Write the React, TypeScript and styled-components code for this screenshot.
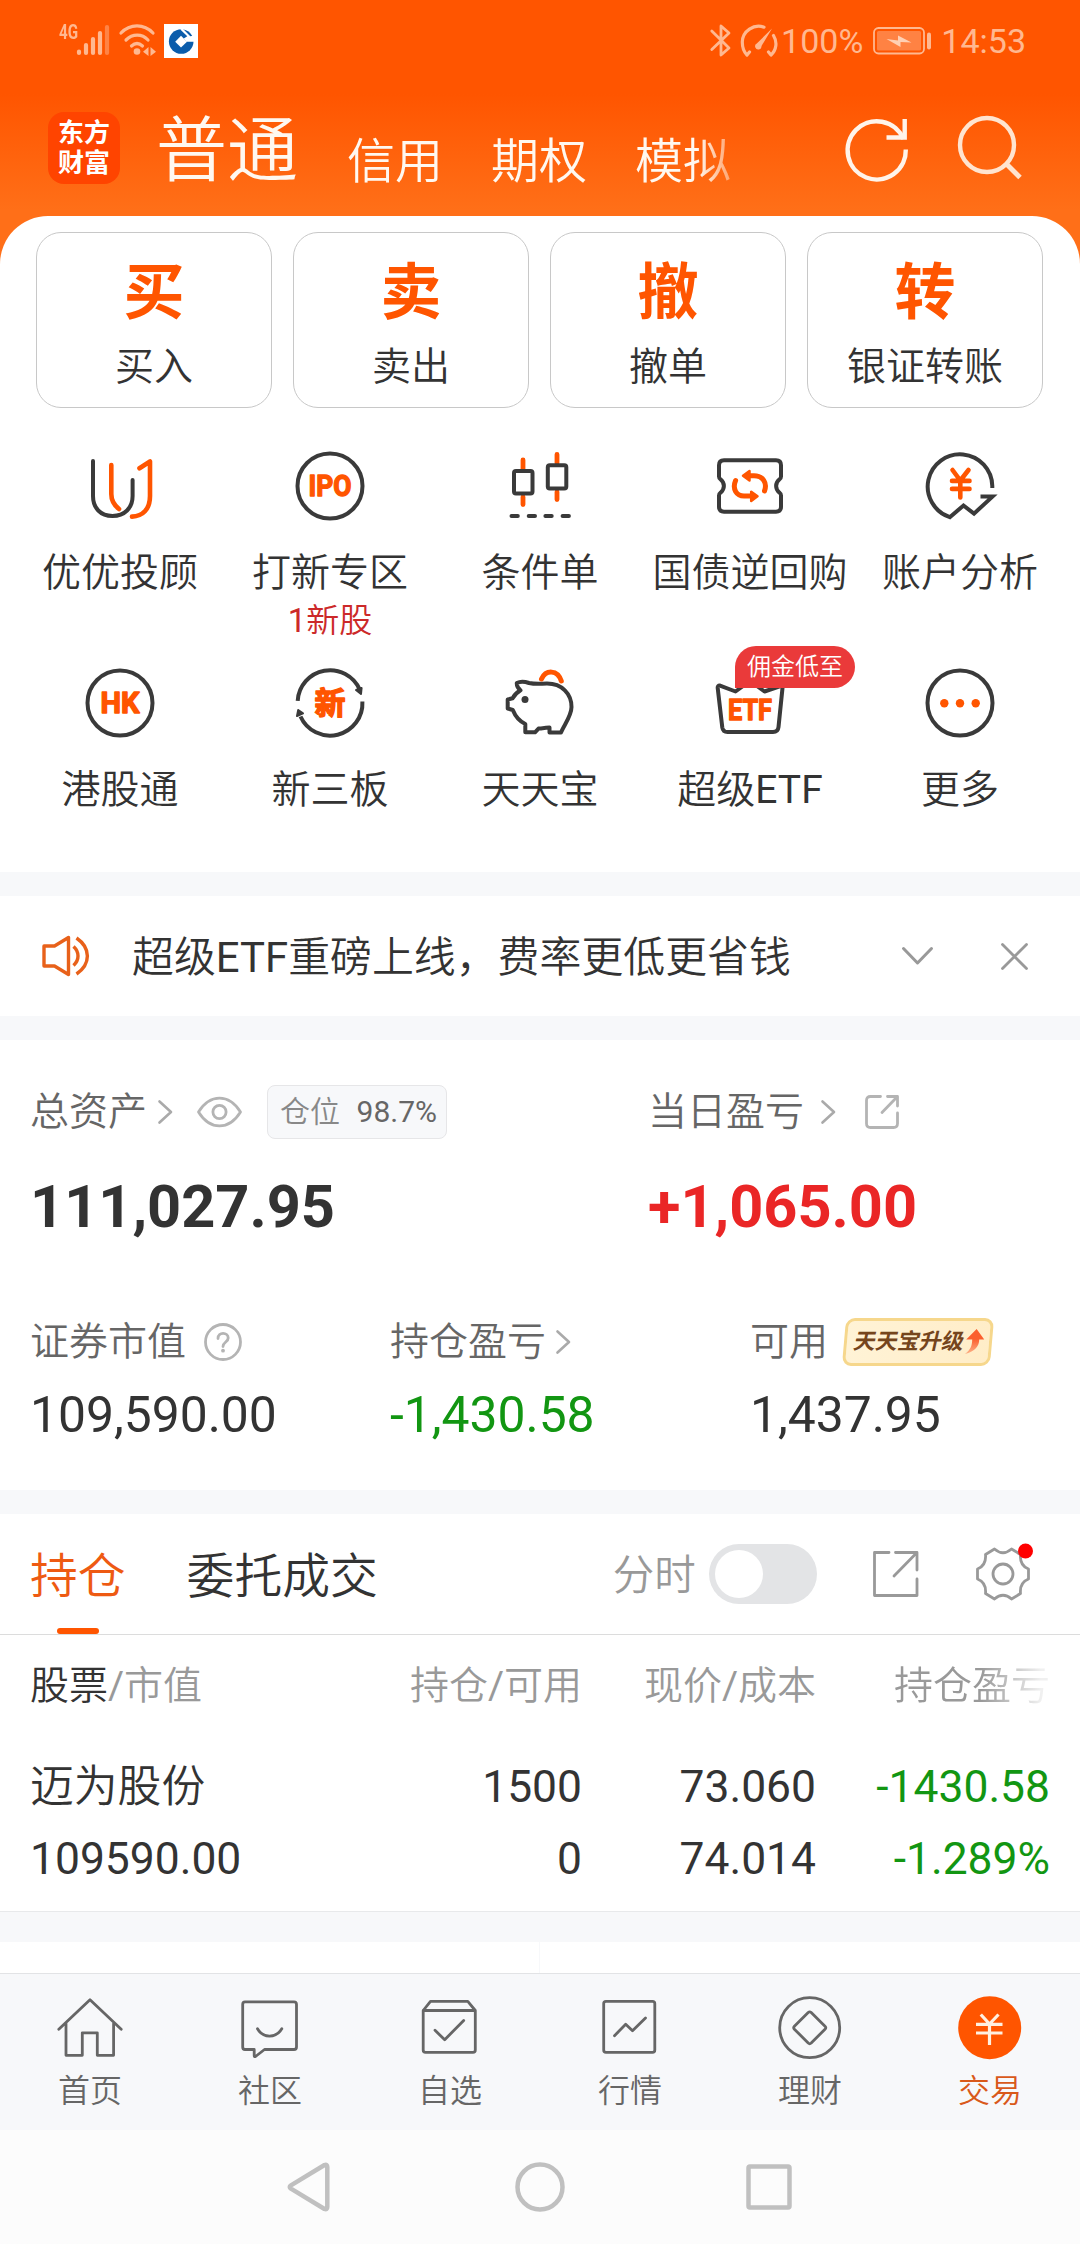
import React from "react";
import styled, { createGlobalStyle } from "styled-components";

const ORANGE = "#ff5500";
const INK = "#333333";
const HEAVY_FONT = 'Roboto, "Noto Sans CJK SC", sans-serif';

const GlobalStyle = createGlobalStyle`
  * { box-sizing: border-box; }
  html, body { margin: 0; padding: 0; }
  body {
    width: 1080px;
    height: 2244px;
    overflow: hidden;
    font-family: Roboto, "Noto Sans CJK SC DemiLight", "Noto Sans CJK SC", sans-serif;
    font-weight: 400;
    color: ${INK};
  }
  svg { display: block; overflow: visible; flex: none; }
`;

const Screen = styled.div`
  display: flex;
  flex-direction: column;
  width: 1080px;
  height: 2244px;
  overflow: hidden;
  background: linear-gradient(#ff5500 0, #ff5500 94px, #ff6f18 210px);
`;

/* ---------- status bar ---------- */

const StatusBar = styled.div`
  display: flex;
  justify-content: space-between;
  align-items: flex-start;
  height: 82px;
  padding: 24px 54px 0 59px;
  color: #ffb890;
`;

const StatusGroup = styled.div`
  display: flex;
  align-items: flex-start;
`;

const StatusText = styled.span<{ $gap: number }>`
  margin-left: ${(p) => p.$gap}px;
  font-size: 34px;
  line-height: 34px;
  white-space: nowrap;
`;

const NetType = styled.span`
  display: inline-block;
  width: 17px;
  font-size: 20px;
  line-height: 16px;
  font-weight: 700;
  transform: scaleX(0.76);
  transform-origin: left center;
`;

const BankIcon = styled.div`
  display: flex;
  width: 34px;
  height: 34px;
  margin-left: 8px;
  background: #fff;
`;

/* ---------- header ---------- */

const Header = styled.header`
  display: flex;
  align-items: flex-start;
  height: 134px;
  padding: 30px 0 0 48px;
  color: #fff8f0;
`;

const Logo = styled.div`
  display: flex;
  flex-direction: column;
  align-items: center;
  justify-content: center;
  width: 72px;
  height: 72px;
  border-radius: 16px;
  background: #ff4400;
  color: #fff;
  font-family: ${HEAVY_FONT};
  font-size: 26px;
  line-height: 30px;
  font-weight: 700;
`;

const MainTab = styled.span`
  margin-left: 36px;
  padding-top: 2px;
  font-size: 71px;
  line-height: 74px;
`;

const SideTabs = styled.div`
  display: flex;
  gap: 48px;
  width: 400px;
  margin-left: 49px;
  padding-top: 25px;
  font-size: 48px;
  line-height: 50px;
  white-space: nowrap;
  mask-image: linear-gradient(90deg, #000 0, #000 350px, rgba(0, 0, 0, 0.4) 385px);
`;

const HeaderActions = styled.div`
  display: flex;
  gap: 51px;
  margin-left: 99px;
  padding-top: 3px;
`;

/* ---------- trade panel ---------- */

const TradePanel = styled.section`
  height: 656px;
  padding: 16px 0 0;
  border-radius: 48px 48px 0 0;
  background: #fff;
`;

const CardRow = styled.div`
  display: grid;
  grid-template-columns: repeat(4, 236px);
  gap: 21px;
  padding: 0 36px;
`;

const Card = styled.div`
  display: flex;
  flex-direction: column;
  align-items: center;
  height: 176px;
  padding-top: 25px;
  border: 1px solid #c8c8c8;
  border-radius: 25px;
`;

const CardGlyph = styled.span`
  font-family: ${HEAVY_FONT};
  font-size: 61px;
  line-height: 70px;
  font-weight: 700;
  color: ${ORANGE};
`;

const CardLabel = styled.span`
  margin-top: 17px;
  font-size: 39px;
  line-height: 44px;
`;

const Shortcuts = styled.div`
  display: grid;
  grid-template-columns: repeat(5, 210px);
  grid-auto-rows: 217px;
  padding: 42px 15px 0;
`;

const Shortcut = styled.div`
  display: flex;
  flex-direction: column;
  align-items: center;
`;

const IconBox = styled.div`
  position: relative;
  width: 72px;
  height: 72px;
`;

const ShortcutLabel = styled.span`
  margin-top: 28px;
  font-size: 39px;
  line-height: 46px;
  white-space: nowrap;
`;

const ShortcutNote = styled.span`
  margin-top: 6px;
  font-size: 33px;
  line-height: 38px;
  color: #cc2929;
`;

const Promo = styled.span`
  position: absolute;
  left: 21px;
  top: -21px;
  width: 120px;
  height: 42px;
  border-radius: 21px 21px 21px 0;
  background: #ea3a3a;
  color: #fff;
  font-size: 24px;
  line-height: 43px;
  text-align: center;
  white-space: nowrap;
`;

const Gap = styled.div<{ $h: number }>`
  flex: none;
  height: ${(p) => p.$h}px;
  background: #f7f8fa;
`;

/* ---------- notice ---------- */

const Notice = styled.section`
  display: flex;
  align-items: center;
  height: 120px;
  padding-left: 42px;
  background: #fff;
`;

const NoticeText = styled.span`
  width: 770px;
  margin-left: 42px;
  padding-top: 4px;
  font-size: 41.9px;
  line-height: 48px;
  white-space: nowrap;
`;

const CloseSlot = styled.div`
  margin-left: 68px;
`;

/* ---------- assets ---------- */

const Assets = styled.section`
  height: 450px;
  padding: 45px 0 0 30px;
  background: #fff;
`;

const Summary = styled.div`
  display: grid;
  grid-template-columns: 618px 1fr;
`;

const Details = styled.div`
  display: grid;
  grid-template-columns: 360px 360px 1fr;
  margin-top: 72px;
`;

const LabelRow = styled.div`
  display: flex;
  align-items: center;
  height: 54px;
  font-size: 39px;
  line-height: 50px;
  color: #666666;
  white-space: nowrap;
`;

const After = styled.div<{ $gap: number }>`
  margin-left: ${(p) => p.$gap}px;
`;

const PositionChip = styled.div`
  display: flex;
  align-items: center;
  justify-content: space-between;
  width: 180px;
  height: 54px;
  margin-left: 25px;
  padding: 0 9px 0 12px;
  border: 1px solid #e6e6e8;
  border-radius: 8px;
  background: #f7f8fa;
  font-size: 30px;
  color: #888888;
`;

const ChipValue = styled.span`
  color: #666666;
`;

const Total = styled.div<{ $color?: string }>`
  margin-top: 32px;
  font-size: 59.5px;
  line-height: 72px;
  font-weight: 700;
  color: ${(p) => p.$color ?? INK};
`;

const Amount = styled.div<{ $color?: string }>`
  margin-top: 16px;
  font-size: 49.8px;
  line-height: 60px;
  color: ${(p) => p.$color ?? INK};
`;

const UpgradeTag = styled.div`
  display: flex;
  align-items: center;
  width: 148px;
  height: 48px;
  margin-left: 16px;
  padding-left: 7px;
  border: 3px solid #f6d78c;
  border-radius: 9px;
  background: linear-gradient(90deg, #fff3d6, #ffedc8);
  transform: skewX(-5deg);
  font-family: ${HEAVY_FONT};
  font-size: 22px;
  line-height: 30px;
  font-weight: 700;
  color: #75451c;
`;

const TagText = styled.span`
  transform: skewX(-8deg);
`;

/* ---------- positions ---------- */

const Tabs = styled.section`
  display: flex;
  height: 121px;
  padding: 0 0 0 30px;
  border-bottom: 1px solid #dcdcdc;
  background: #fff;
`;

const Tab = styled.div<{ $active?: boolean; $gap?: number }>`
  display: flex;
  flex-direction: column;
  align-items: center;
  justify-content: flex-end;
  height: 120px;
  margin-left: ${(p) => p.$gap ?? 0}px;
  font-size: 47.8px;
  line-height: 56px;
  color: ${(p) => (p.$active ? "#ee5a12" : INK)};
`;

const TabMark = styled.div<{ $active?: boolean }>`
  width: 42px;
  height: 6px;
  margin-top: 23px;
  border-radius: 3px;
  background: ${(p) => (p.$active ? ORANGE : "transparent")};
`;

const TabTools = styled.div`
  display: flex;
  align-items: center;
  height: 120px;
  margin-left: 235px;
`;

const ToolLabel = styled.span`
  padding-top: 3px;
  font-size: 41.5px;
  line-height: 48px;
  color: #999999;
`;

const Switch = styled.div`
  width: 108px;
  height: 60px;
  margin-left: 13px;
  padding: 6px;
  border-radius: 30px;
  background: #e3e4e6;
`;

const Knob = styled.div`
  width: 48px;
  height: 48px;
  border-radius: 50%;
  background: #fff;
`;

const Table = styled.section`
  height: 277px;
  padding: 26px 30px 0 30px;
  border-bottom: 1px solid #e8e9eb;
  background: #fff;
`;

const TableRow = styled.div<{ $head?: boolean }>`
  display: grid;
  grid-template-columns: 318px 234px 234px 234px;
  margin-bottom: ${(p) => (p.$head ? 40 : 0)}px;
  font-size: ${(p) => (p.$head ? 39 : 44.4)}px;
  line-height: ${(p) => (p.$head ? 50 : 72)}px;
  color: ${(p) => (p.$head ? "#999999" : INK)};
  white-space: nowrap;
`;

const Cell = styled.span<{ $left?: boolean; $green?: boolean; $fade?: boolean; $name?: boolean }>`
  text-align: ${(p) => (p.$left ? "left" : "right")};
  ${(p) => p.$green && "color: #129612;"}
  ${(p) => p.$name && "font-size: 43.8px;"}
  ${(p) => p.$fade && "mask-image: linear-gradient(90deg, #000 0, #000 165px, rgba(0,0,0,0.15) 225px);"}
`;

const Strong = styled.span`
  color: ${INK};
`;

const NextPanel = styled.div`
  display: grid;
  grid-template-columns: 539px 540px;
  gap: 1px;
  flex: none;
  height: 31px;
  background: #f7f8fa;
`;

const NextCell = styled.div`
  background: #fff;
`;

/* ---------- bottom ---------- */

const BottomBar = styled.nav`
  display: grid;
  grid-template-columns: repeat(6, 180px);
  height: 157px;
  border-top: 1px solid #e2e3e5;
  background: #f7f8fa;
`;

const BottomItem = styled.div<{ $active?: boolean }>`
  display: flex;
  flex-direction: column;
  align-items: center;
  padding-top: 22px;
  font-size: 32px;
  line-height: 38px;
  color: ${(p) => (p.$active ? "#d9591a" : "#666666")};
`;

const BottomLabel = styled.span`
  margin-top: 12px;
`;

const SystemNav = styled.div`
  display: flex;
  align-items: center;
  height: 114px;
  padding-left: 287px;
  background: #fcfcfc;
`;

/* ---------- icons ---------- */

const line = { fill: "none", strokeLinecap: "round", strokeLinejoin: "round" } as const;

const ICON_INK = "#3a3a3a";

const Glyph72 = ({ children }: { children: React.ReactNode }) => (
  <svg width="72" height="72" viewBox="0 0 72 72" {...line} stroke={ICON_INK} strokeWidth={4}>
    {children}
  </svg>
);

const IconWord = ({ text, y, width, size }: { text: string; y: number; width: number; size: number }) => (
  <text
    x="36"
    y={y}
    textAnchor="middle"
    textLength={width}
    lengthAdjust="spacingAndGlyphs"
    fontFamily={HEAVY_FONT}
    fontWeight="700"
    fontSize={size}
    fill={ORANGE}
    stroke={ORANGE}
    strokeWidth="1.4"
  >
    {text}
  </text>
);

const AdvisorIcon = () => (
  <Glyph72>
    <path d="M9 11V46C9 58 16.500 66 28.500 66S48.600 58 48.600 46V30" />
    <path stroke={ORANGE} strokeWidth="4.600" d="M27.300 15V44C27.300 51 30 55 35 59M55.500 18.300L66 11.500V46C66 59 59 66.300 48 66.600" />
  </Glyph72>
);
const IpoIcon = () => (
  <Glyph72>
    <circle cx="36" cy="36" r="32.500" />
    <IconWord text="IPO" y={46.4} width={43} size={30} />
  </Glyph72>
);
const CandleIcon = () => (
  <Glyph72>
    <path stroke={ORANGE} strokeWidth="4.800" d="M19 10V19M19 47V54.500M53 4.500V13M53 42V49.500" />
    <rect x="10" y="21" width="18.500" height="22.500" rx="2" />
    <rect x="43.800" y="15.300" width="18.500" height="23.200" rx="2" />
    <path d="M7.500 66H13.800M24.700 66H31M41.400 66H47.700M58.600 66H64.900" />
  </Glyph72>
);
const BondIcon = () => (
  <Glyph72>
    <path d="M10 10.300H62Q67 10.300 67 15.300V26.500Q67 28.300 65.500 29.300C61 33 61 39 65.500 42.700Q67 43.700 67 45.500V56.700Q67 61.700 62 61.700H10Q5 61.700 5 56.700V45.500Q5 43.700 6.500 42.700C11 39 11 33 6.500 29.300Q5 28.300 5 26.500V15.300Q5 10.300 10 10.300Z" />
    <g stroke={ORANGE} strokeWidth="5">
      <path d="M35 25.800H40C49 25.800 53.500 33 50.500 41M21.600 30.500C18 39 22.500 46 30 46H37" />
      <path d="M29 25.700L35.500 21V30.500ZM43.500 46.200L37.200 41.700V51Z" fill={ORANGE} strokeWidth="2.500" />
    </g>
  </Glyph72>
);
const AnalysisIcon = () => (
  <Glyph72>
    <path strokeLinejoin="miter" strokeLinecap="butt" d="M68.300 38V36A32.300 32.300 0 1 0 25.800 67.200L39.500 55.500L50 63.600L68.500 46.600H56.500" />
    <path stroke={ORANGE} strokeWidth="4.600" d="M28.500 20L36.300 30.500L44.500 20M36.300 31V47.500M28 30.900H45.500M28 38.900H45.500" />
  </Glyph72>
);
const HkIcon = () => (
  <Glyph72>
    <circle cx="36" cy="36" r="32.500" />
    <IconWord text="HK" y={46.4} width={39} size={30} />
  </Glyph72>
);
const NewBoardIcon = () => (
  <Glyph72>
    <path strokeLinecap="butt" d="M3.700 33.800A32.400 32.400 0 0 1 65.700 22.500M68.400 34.500A32.400 32.400 0 0 1 6.500 49.500" />
    <path d="M62 23L67.600 21L67 27ZM4.200 43L9 46.400L3 49Z" fill={ICON_INK} strokeWidth="2" />
    <IconWord text="新" y={47} width={31} size={31} />
  </Glyph72>
);
const PiggyIcon = () => (
  <Glyph72>
    <path d="M12.800 16C17 13.800 21 14.600 25 16C32 17.500 37 16.600 43 16.600C58 16.600 67.500 27 67.500 40C67.500 49 60 58 57 65.500H45.500V60.600C42 61 38 61.300 34.500 61.600L31 65.300H21.300V57C15 54 11 48.500 8.800 43L3.700 41.500V32.500L8.600 31.300C10.500 27.500 13 25.500 16.500 23.300C13.500 21 12.600 19 12.800 16Z" />
    <circle cx="21" cy="32.600" r="3.500" fill={ICON_INK} stroke="none" />
    <path stroke={ORANGE} strokeWidth="5" d="M37.500 12C42 2.500 53.500 2.500 57.300 14" />
  </Glyph72>
);
const EtfIcon = () => (
  <Glyph72>
    <path d="M6 18.600L21.500 24.500L36 14L50.500 24.500L66.500 19Q68.800 18.800 68.500 21L64.500 60Q64 65 59 65H13.500Q9 65 8.300 60.500L3.700 21Q3.500 18.300 6 18.600Z" />
    <IconWord text="ETF" y={53.2} width={44} size={30} />
  </Glyph72>
);
const MoreIcon = () => (
  <Glyph72>
    <circle cx="36" cy="36" r="32.500" />
    <g fill={ORANGE} stroke="none">
      <circle cx="20.300" cy="36.300" r="4.200" />
      <circle cx="36" cy="36.300" r="4.200" />
      <circle cx="51.700" cy="36.300" r="4.200" />
    </g>
  </Glyph72>
);

const Chevron = () => (
  <svg width="15" height="24" viewBox="0 0 15 24" {...line} stroke="#aaaaaa" strokeWidth="2.600">
    <path d="M1.500 1.500L13 12L1.500 22.500" />
  </svg>
);

const Glyph64 = ({ children }: { children: React.ReactNode }) => (
  <svg width="64" height="64" viewBox="0 0 64 64" {...line} stroke="#666666" strokeWidth={2.800}>
    {children}
  </svg>
);

/* ---------- data ---------- */

const cards = [
  { glyph: "买", label: "买入" },
  { glyph: "卖", label: "卖出" },
  { glyph: "撤", label: "撤单" },
  { glyph: "转", label: "银证转账" },
];

const shortcuts: { label: string; icon: React.ReactNode; note?: string; promo?: string }[] = [
  { label: "优优投顾", icon: <AdvisorIcon /> },
  { label: "打新专区", icon: <IpoIcon />, note: "1新股" },
  { label: "条件单", icon: <CandleIcon /> },
  { label: "国债逆回购", icon: <BondIcon /> },
  { label: "账户分析", icon: <AnalysisIcon /> },
  { label: "港股通", icon: <HkIcon /> },
  { label: "新三板", icon: <NewBoardIcon /> },
  { label: "天天宝", icon: <PiggyIcon /> },
  { label: "超级ETF", icon: <EtfIcon />, promo: "佣金低至" },
  { label: "更多", icon: <MoreIcon /> },
];

const bottomItems = [
  {
    label: "首页",
    icon: (
      <path d="M.8 33.300L32 3.800L63.200 33.300M8 27.500V59.300H24.300V36.800H39.300V59.300H55.600V27.500" />
    ),
  },
  {
    label: "社区",
    icon: (
      <path d="M7 5.900H56Q58.500 5.900 58.500 8.400V51Q58.500 53.500 56 53.500H26.500L17.500 60.500Q16.200 61.200 16.200 59.500V53.500H7Q4.700 53.500 4.700 51V8.400Q4.700 5.900 7 5.900ZM19.500 32.800C25 42.500 38 42.500 43.800 32.800" />
    ),
  },
  {
    label: "自选",
    icon: (
      <path d="M5.200 14.500L12.500 5.300H49.800L57.300 14.500V54Q57.300 56.400 55 56.400H7.500Q5.200 56.400 5.200 54ZM5.200 14.500H57.300M17 34.300L26.700 43.700L45.700 24.500" />
    ),
  },
  {
    label: "行情",
    icon: (
      <path d="M8 5.300H54.500Q56.800 5.300 56.800 7.600V54Q56.800 56.400 54.500 56.400H8Q5.700 56.400 5.700 54V7.600Q5.700 5.300 8 5.300ZM16.500 39.700L27.700 28.300L34.500 34.800L47.500 22" />
    ),
  },
  {
    label: "理财",
    icon: (
      <>
        <circle cx="31.700" cy="31.700" r="30" />
        <path d="M30.200 16.600Q31.700 15.200 33.200 16.600L47 30.200Q48.500 31.700 47 33.200L33.200 47Q31.700 48.400 30.200 47L16.400 33.200Q15 31.700 16.400 30.200Z" />
      </>
    ),
  },
  {
    label: "交易",
    active: true,
    icon: (
      <>
        <circle cx="31.700" cy="31.700" r="31.500" fill={ORANGE} stroke="none" />
        <path stroke="#fff0e0" strokeWidth="3.200" strokeLinecap="butt" d="M22.800 18.500L31.500 28L40.500 18.500M31.500 28V49M18 28.300H44.500M18 37H44.500" />
      </>
    ),
  },
];

export default function App() {
  return (
    <Screen>
      <GlobalStyle />
      <StatusBar>
        <StatusGroup>
          <NetType>4G</NetType>
          <svg width="34" height="32" viewBox="0 0 34 32" {...line} stroke="#ffb890" strokeWidth="4.200">
            <path d="M3 27.500V29M10 21V29M17 15V29M24 9V29" />
            <path d="M31 3V29" stroke="#ff8345" />
          </svg>
          <After $gap={8}>
            <svg width="38" height="32" viewBox="0 0 38 32" {...line} stroke="#ffb890" strokeWidth="3.200">
              <path d="M3 9C12-.5 26-.5 35 9M8 16C14.500 9.500 24 9.500 30 16M13.500 22C17 18.800 21 18.800 24.500 22" />
              <circle cx="19" cy="27.500" r="3.300" fill="#ffb890" stroke="none" />
              <path d="M30.500 23V32L25 27.800ZM32.500 23V32L38 27.800Z" fill="#ffb890" stroke="none" />
            </svg>
          </After>
          <BankIcon>
            <svg width="34" height="34" viewBox="0 0 34 34">
              <circle cx="17.200" cy="17.500" r="12.300" fill="#0a5cab" />
              <path fill="#fff" d="M17 11.800L23 17.700L17 23.500L11.200 17.700Z" />
              <path fill="#fff" d="M19.800 14.600L23.300 12.200L16.300 5.500L18.600 4.500L26.300 12.300L30.500 11.500V17.800H22.500Z" />
            </svg>
          </BankIcon>
        </StatusGroup>
        <StatusGroup>
          <svg width="21" height="33" viewBox="0 0 21 33" {...line} stroke="#ffb890" strokeWidth="2.800">
            <path d="M1.800 7L19 24L11 31V2L19 9L1.800 25.500" />
          </svg>
          <After $gap={9}>
            <svg width="38" height="33" viewBox="0 0 38 33" {...line} stroke="#ffb890" strokeWidth="3.200">
              <path d="M24 3.200C14-.5 2.500 7 2.300 18C2.300 23 4 28 7 31L9.500 28M33.500 11.500C37.500 18 36.500 26 31 31L28.500 28" />
              <path d="M32 4.500L21.500 22A3.200 3.200 0 1 1 16.800 19.500Z" fill="#ffb890" stroke="none" />
            </svg>
          </After>
          <StatusText $gap={3}>100%</StatusText>
          <After $gap={10}>
            <svg width="59" height="34" viewBox="0 -3 59 34" {...line} stroke="#ffb890" strokeWidth="1.800">
              <rect x="1" y="1" width="50" height="25.500" rx="4.500" />
              <rect x="4" y="4" width="44" height="19.500" rx="1.500" fill="#ff8243" stroke="none" />
              <path d="M13.500 12L25 13.500V8.500L38.500 15.500L27.500 15V20Z" fill="#ffd0b4" stroke="none" />
              <path d="M56 7.500V20.500" strokeWidth="4" />
            </svg>
          </After>
          <StatusText $gap={9}>14:53</StatusText>
        </StatusGroup>
      </StatusBar>

      <Header>
        <Logo>
          <span>东方</span>
          <span>财富</span>
        </Logo>
        <MainTab>普通</MainTab>
        <SideTabs>
          <span>信用</span>
          <span>期权</span>
          <span>模拟</span>
        </SideTabs>
        <HeaderActions>
          <svg width="62" height="66" viewBox="0 0 62 66" fill="none" stroke="#fff4ea" strokeWidth="4.400">
            <path d="M59.800 34.500A29.100 29.100 0 1 1 57.500 24" />
            <path d="M58.700 4V22.500H40.500" />
          </svg>
          <svg width="64" height="66" viewBox="0 0 64 66" fill="none" stroke="#ffe4d0" strokeWidth="4.400">
            <circle cx="28" cy="30" r="27" />
            <path d="M47.500 49L61 62.500" strokeWidth="5" />
          </svg>
        </HeaderActions>
      </Header>

      <TradePanel>
        <CardRow>
          {cards.map((c) => (
            <Card key={c.label}>
              <CardGlyph>{c.glyph}</CardGlyph>
              <CardLabel>{c.label}</CardLabel>
            </Card>
          ))}
        </CardRow>
        <Shortcuts>
          {shortcuts.map((s) => (
            <Shortcut key={s.label}>
              <IconBox>
                {s.icon}
                {s.promo && <Promo>{s.promo}</Promo>}
              </IconBox>
              <ShortcutLabel>{s.label}</ShortcutLabel>
              {s.note && <ShortcutNote>{s.note}</ShortcutNote>}
            </Shortcut>
          ))}
        </Shortcuts>
      </TradePanel>

      <Gap $h={24} />
      <Notice>
        <svg width="48" height="42" viewBox="0 0 48 42" {...line} strokeLinecap="butt" stroke="#e8611a" strokeWidth="3.400">
          <path d="M2 11H12.500L26.500 2.500V39.500L12.500 31H2ZM31.500 11.500C37.500 17 37.500 25 31.500 30.500M34.500 3C49 13 49 29 34.500 39" />
        </svg>
        <NoticeText>超级ETF重磅上线，费率更低更省钱</NoticeText>
        <svg width="31" height="18" viewBox="0 0 31 18" {...line} stroke="#999999" strokeWidth="3">
          <path d="M1.500 1.500L15.500 16L29.500 1.500" />
        </svg>
        <CloseSlot>
          <svg width="27" height="27" viewBox="0 0 27 27" {...line} stroke="#999999" strokeWidth="2.800">
            <path d="M1.500 1.500L25.500 25.500M25.500 1.500L1.500 25.500" />
          </svg>
        </CloseSlot>
      </Notice>
      <Gap $h={24} />

      <Assets>
        <Summary>
          <div>
            <LabelRow>
              总资产
              <After $gap={11}><Chevron /></After>
              <After $gap={24}>
                <svg width="45" height="30" viewBox="0 0 45 30" {...line} stroke="#b4b4b4" strokeWidth="2.800">
                  <path d="M1.500 15C13-3.500 32-3.500 43.500 15C32 33.500 13 33.500 1.500 15Z" />
                  <circle cx="22.500" cy="15" r="6.600" />
                </svg>
              </After>
              <PositionChip>
                <span>仓位</span>
                <ChipValue>98.7%</ChipValue>
              </PositionChip>
            </LabelRow>
            <Total>111,027.95</Total>
          </div>
          <div>
            <LabelRow>
              当日盈亏
              <After $gap={17}><Chevron /></After>
              <After $gap={29}>
                <svg width="34" height="34" viewBox="0 0 34 34" {...line} stroke="#b4b4b4" strokeWidth="2.800">
                  <path d="M15.500 1.500H5.500Q1.500 1.500 1.500 5.500V28.500Q1.500 32.500 5.500 32.500H28.500Q32.500 32.500 32.500 28.500V18M22.500 1.500H32.500V11M32 2L17 17.500" />
                </svg>
              </After>
            </LabelRow>
            <Total $color="#ea2626">+1,065.00</Total>
          </div>
        </Summary>
        <Details>
          <div>
            <LabelRow>
              证券市值
              <After $gap={18}>
                <svg width="38" height="38" viewBox="0 0 38 38" {...line} stroke="#b4b4b4" strokeWidth="2.800">
                  <circle cx="19" cy="19" r="17.500" />
                  <path d="M14 15.500C14 8.500 24.200 9 24.200 15C24.200 19 19 19 19 23.500" />
                  <circle cx="19" cy="27.700" r="1.900" fill="#b4b4b4" stroke="none" />
                </svg>
              </After>
            </LabelRow>
            <Amount>109,590.00</Amount>
          </div>
          <div>
            <LabelRow>
              持仓盈亏
              <After $gap={10}><Chevron /></After>
            </LabelRow>
            <Amount $color="#129612">-1,430.58</Amount>
          </div>
          <div>
            <LabelRow>
              可用
              <UpgradeTag>
                <TagText>天天宝升级</TagText>
                <svg width="20" height="26" viewBox="0 0 20 26">
                  <defs>
                    <linearGradient id="rise" x1="0" y1="0" x2="0" y2="1">
                      <stop offset="0.400" stopColor="#fb5f2e" />
                      <stop offset="1" stopColor="#fdb48a" />
                    </linearGradient>
                  </defs>
                  <path fill="url(#rise)" d="M11.500 0L20 10.500H15C15.500 17 12 22.500 2 25C7 21 8.500 17 8 10.500H2Z" />
                </svg>
              </UpgradeTag>
            </LabelRow>
            <Amount>1,437.95</Amount>
          </div>
        </Details>
      </Assets>
      <Gap $h={24} />

      <Tabs>
        <Tab $active>
          持仓
          <TabMark $active />
        </Tab>
        <Tab $gap={61}>
          委托成交
          <TabMark />
        </Tab>
        <TabTools>
          <ToolLabel>分时</ToolLabel>
          <Switch>
            <Knob />
          </Switch>
          <After $gap={56}>
            <svg width="46" height="46" viewBox="0 0 46 46" {...line} stroke="#999999" strokeWidth="2.800">
              <path d="M16 1.500H1.500V44.500H44V28M22.500 1.500H44V19M43.500 2L21 25" />
            </svg>
          </After>
          <After $gap={56}>
            <svg width="56" height="54" viewBox="0 0 56 54" {...line} stroke="#999999" strokeWidth="2.800">
              <path d="M19.500 2Q28 9.500 36.500 2L45.500 7.500Q44.500 18.500 53.500 22V32Q44.500 35.500 45.500 46.500L36.500 52Q28 44.500 19.500 52L10.500 46.500Q11.500 35.500 2.500 32V22Q11.500 18.500 10.500 7.500Z" />
              <circle cx="28" cy="27" r="10" />
              <circle cx="50.500" cy="4" r="7.500" fill="#ff0000" stroke="none" />
            </svg>
          </After>
        </TabTools>
      </Tabs>

      <Table>
        <TableRow $head>
          <Cell $left>
            <Strong>股票</Strong>/市值
          </Cell>
          <Cell>持仓/可用</Cell>
          <Cell>现价/成本</Cell>
          <Cell $fade>持仓盈亏</Cell>
        </TableRow>
        <TableRow>
          <Cell $left $name>迈为股份</Cell>
          <Cell>1500</Cell>
          <Cell>73.060</Cell>
          <Cell $green>-1430.58</Cell>
        </TableRow>
        <TableRow>
          <Cell $left>109590.00</Cell>
          <Cell>0</Cell>
          <Cell>74.014</Cell>
          <Cell $green>-1.289%</Cell>
        </TableRow>
      </Table>
      <Gap $h={30} />
      <NextPanel>
        <NextCell />
        <NextCell />
      </NextPanel>

      <BottomBar>
        {bottomItems.map((b) => (
          <BottomItem key={b.label} $active={b.active}>
            <Glyph64>{b.icon}</Glyph64>
            <BottomLabel>{b.label}</BottomLabel>
          </BottomItem>
        ))}
      </BottomBar>
      <SystemNav>
        <svg width="43" height="50" viewBox="0 0 43 50" {...line} stroke="#c0c0c0" strokeWidth="4.500">
          <path d="M3.500 23.600Q2 25 3.500 26.400L37.500 47Q40.300 48 40.300 45V5Q40.300 2 37.500 3Z" />
        </svg>
        <After $gap={185}>
          <svg width="50" height="50" viewBox="0 0 50 50" {...line} stroke="#c0c0c0" strokeWidth="4.500">
            <circle cx="25" cy="25" r="22.500" />
          </svg>
        </After>
        <After $gap={181}>
          <svg width="46" height="46" viewBox="0 0 46 46" {...line} stroke="#c0c0c0" strokeWidth="4.500">
            <rect x="2.500" y="2.500" width="41" height="41" rx="1.500" />
          </svg>
        </After>
      </SystemNav>
    </Screen>
  );
}
